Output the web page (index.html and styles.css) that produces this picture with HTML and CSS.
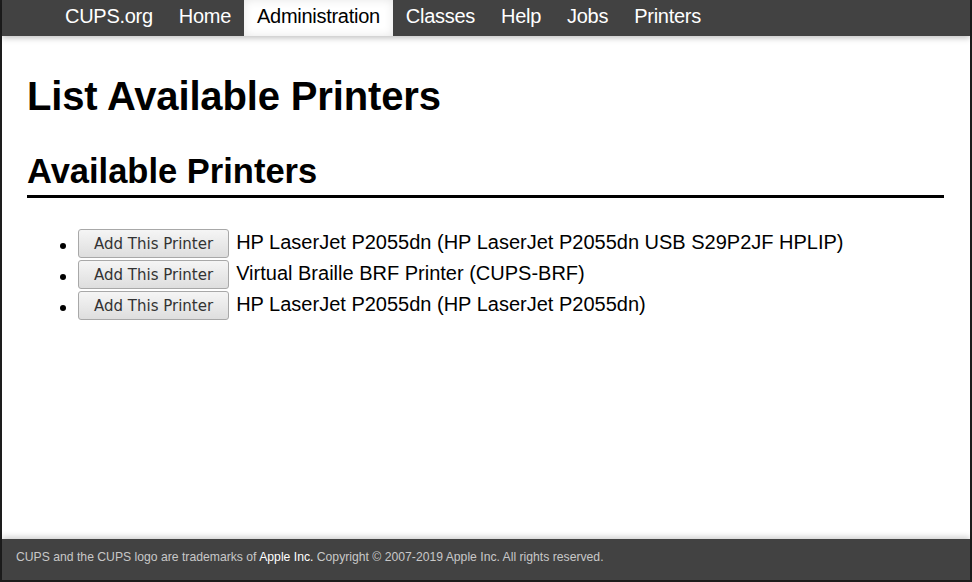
FILE: index.html
```html
<!DOCTYPE html>
<html lang="en">
<head>
<meta charset="utf-8">
<title>List Available Printers - CUPS</title>
<link rel="stylesheet" href="styles.css">
</head>
<body>
<div class="frame">
  <nav class="header">
    <ul class="nav-list">
      <li><a class="nav-link" href="#">CUPS.org</a></li>
      <li><a class="nav-link" href="#">Home</a></li>
      <li><a class="nav-link active" href="#">Administration</a></li>
      <li><a class="nav-link" href="#">Classes</a></li>
      <li><a class="nav-link" href="#">Help</a></li>
      <li><a class="nav-link" href="#">Jobs</a></li>
      <li><a class="nav-link" href="#">Printers</a></li>
    </ul>
  </nav>
  <main class="body">
    <h1 class="title">List Available Printers</h1>
    <h2 class="subtitle">Available Printers</h2>
    <ul class="printers">
      <li class="printer"><button class="add-btn" type="button">Add This Printer</button><span class="printer-name">HP LaserJet P2055dn (HP LaserJet P2055dn USB S29P2JF HPLIP)</span></li>
      <li class="printer"><button class="add-btn" type="button">Add This Printer</button><span class="printer-name">Virtual Braille BRF Printer (CUPS-BRF)</span></li>
      <li class="printer"><button class="add-btn" type="button">Add This Printer</button><span class="printer-name">HP LaserJet P2055dn (HP LaserJet P2055dn)</span></li>
    </ul>
  </main>
  <footer class="footer">
    CUPS and the CUPS logo are trademarks of <a class="footer-link" href="#">Apple Inc.</a> Copyright &copy; 2007-2019 Apple Inc. All rights reserved.
  </footer>
</div>
</body>
</html>
```

FILE: styles.css
```css
html, body {
  margin: 0;
  padding: 0;
}
body {
  background: #1d1d1d;
  font-family: "Liberation Sans", Arial, Helvetica, sans-serif;
  color: #000;
}
.frame {
  box-sizing: border-box;
  height: 582px;
  padding: 0 2px 2px 2px;
  display: flex;
  flex-direction: column;
}
.header {
  background: #424242;
  height: 36px;
  flex: 0 0 36px;
  box-shadow: 0 2px 6px rgba(0,0,0,0.25);
  position: relative;
  z-index: 2;
  padding-left: 50px;
}
.nav-list {
  list-style: none;
  margin: 0;
  padding: 0;
  display: flex;
  height: 36px;
}
.nav-link {
  display: block;
  height: 36px;
  box-sizing: border-box;
  padding: 0 13px 4px;
  line-height: 32px;
  font-size: 20px;
  letter-spacing: -0.28px;
  color: #fff;
  text-decoration: none;
}
.nav-link.active {
  background: #fff;
  color: #000;
  box-shadow: inset 0 0 10px rgba(0,0,0,0.1);
}
.body {
  flex: 1 1 auto;
  background: #fff;
  padding: 0 26px 0 25px;
  overflow: hidden;
}
.title {
  margin: 37px 0 0;
  font-size: 40px;
  line-height: 46px;
  letter-spacing: -0.15px;
  font-weight: bold;
}
.subtitle {
  margin: 33px 0 0;
  font-size: 34.5px;
  line-height: 38px;
  font-weight: bold;
  padding-bottom: 5px;
  border-bottom: 3px solid #000;
}
.printers {
  list-style: none;
  margin: 31px 0 0;
  padding: 0 0 0 33px;
  display: flex;
  flex-direction: column;
  gap: 2px;
}
.printer {
  display: flex;
  align-items: baseline;
  font-size: 20px;
}
.printer::before {
  content: "";
  width: 6px;
  height: 6px;
  border-radius: 50%;
  background: #000;
  margin-right: 12px;
}
.add-btn {
  height: 29px;
  padding: 0 15px;
  border: 1px solid #a8a8a8;
  border-radius: 3px;
  background: linear-gradient(#f5f5f5, #dedede);
  font-family: "DejaVu Sans", sans-serif;
  font-size: 15px;
  color: #333;
  margin-right: 7px;
}
.printer-name {
  line-height: 23px;
}
.footer {
  flex: 0 0 41px;
  background: #424242;
  color: #c8c8c8;
  font-size: 12.2px;
  line-height: 37px;
  padding-left: 14px;
  box-shadow: 0 -2px 6px rgba(0,0,0,0.2);
  position: relative;
  z-index: 2;
}
.footer-link {
  color: #fff;
  text-decoration: none;
}
```
